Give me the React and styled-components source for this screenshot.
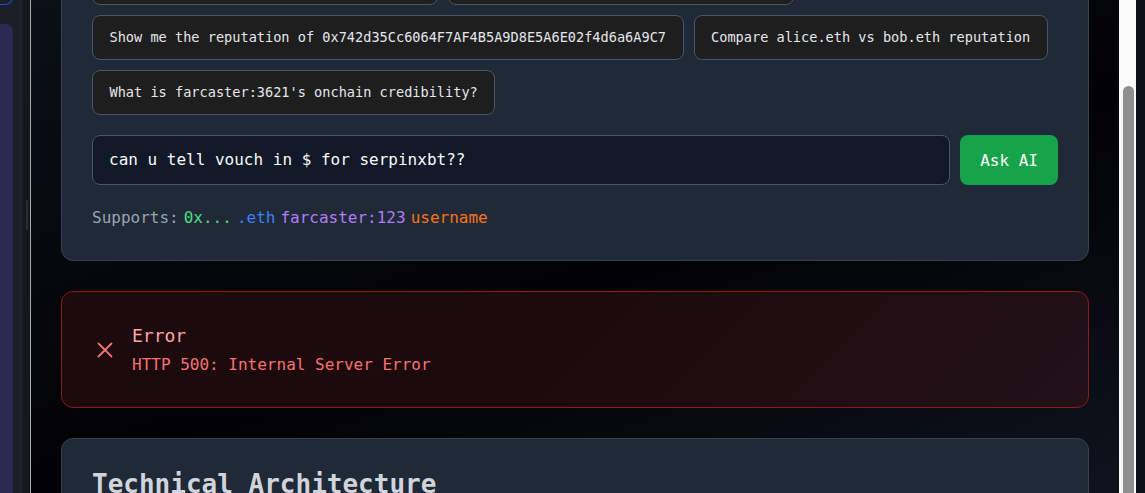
import React from "react";
import styled, { createGlobalStyle } from "styled-components";

const mono = `"DejaVu Sans Mono", "Liberation Mono", monospace`;

const GlobalStyle = createGlobalStyle`
  html, body {
    margin: 0;
    padding: 0;
    height: 100%;
    overflow: hidden;
    background: #0c0f17;
  }
  #root {
    height: 100%;
  }
`;

const suggestions = [
  "Analyze dwr.eth's reputation in detail",
  "Is vitalik.eth a trusted onchain user?",
  "Show me the reputation of 0x742d35Cc6064F7AF4B5A9D8E5A6E02f4d6a6A9C7",
  "Compare alice.eth vs bob.eth reputation",
  "What is farcaster:3621's onchain credibility?",
];

const supports = [
  { label: "0x...", color: "#4ade80" },
  { label: ".eth", color: "#3b82f6" },
  { label: "farcaster:123", color: "#b27cf6" },
  { label: "username", color: "#f97316" },
];

export default function App() {
  return (
    <>
      <GlobalStyle />
      <Shell>
        <Sidebar>
          <SideTopBox />
          <SidePanel />
        </Sidebar>
        <Splitter>
          <Handle />
        </Splitter>
        <Divider />
        <Main>
          <Column>
            <Card>
              <Chips>
                {suggestions.map((s) => (
                  <Chip key={s}>{s}</Chip>
                ))}
              </Chips>
              <InputRow>
                <QueryInput defaultValue="can u tell vouch in $ for serpinxbt??" />
                <AskButton>Ask AI</AskButton>
              </InputRow>
              <Supports>
                <span>Supports:</span>
                {supports.map((s) => (
                  <Tag key={s.label} $color={s.color}>
                    {s.label}
                  </Tag>
                ))}
              </Supports>
            </Card>

            <ErrorBox>
              <ErrorIcon viewBox="0 0 16 16">
                <path d="M1.5 1.5 L14.5 14.5 M14.5 1.5 L1.5 14.5" />
              </ErrorIcon>
              <div>
                <ErrorTitle>Error</ErrorTitle>
                <ErrorMessage>HTTP 500: Internal Server Error</ErrorMessage>
              </div>
            </ErrorBox>

            <Card>
              <SectionTitle>Technical Architecture</SectionTitle>
            </Card>
          </Column>
        </Main>
        <ScrollTrack>
          <ScrollThumb />
        </ScrollTrack>
        <RightEdge />
      </Shell>
    </>
  );
}

const Shell = styled.div`
  display: flex;
  width: 100vw;
  height: 100vh;
  overflow: hidden;
  background: #0c0f17;
`;

const Sidebar = styled.div`
  flex: none;
  width: 23px;
  box-sizing: border-box;
  padding-right: 10px;
  background: #1e1f26;
  display: flex;
  flex-direction: column;
`;

const SideTopBox = styled.div`
  flex: none;
  height: 20px;
  margin-top: -17px;
  border: 1px solid #1d4ed8;
  border-left: none;
  border-radius: 0 0 8px 0;
`;

const SidePanel = styled.div`
  flex: 1;
  margin-top: 19px;
  background: #2d2950;
  border-radius: 0 8px 0 0;
`;

const Splitter = styled.div`
  flex: none;
  width: 7px;
  background: #16161d;
  display: flex;
  justify-content: center;
  padding-top: 200px;
  box-sizing: border-box;
`;

const Handle = styled.div`
  width: 2px;
  height: 30px;
  border-radius: 1px;
  background: #2c2c38;
`;

const Divider = styled.div`
  flex: none;
  width: 1px;
  background: #ababab;
`;

const Main = styled.div`
  flex: 1;
  min-width: 0;
  overflow: hidden;
  padding: 0 30px;
  background: linear-gradient(160deg, #0b0f18 0%, #020204 55%, #0e131d 100%);
`;

const Column = styled.div`
  margin-top: -71px;
  display: flex;
  flex-direction: column;
  gap: 30px;
`;

const Card = styled.div`
  background: #1f2937;
  border: 1px solid #374151;
  border-radius: 12px;
  padding: 30px;
`;

const Chips = styled.div`
  display: flex;
  flex-wrap: wrap;
  gap: 10px;
  margin-bottom: 20px;
`;

const Chip = styled.button`
  background: #1e1e1e;
  border: 1px solid #4b5563;
  border-radius: 8px;
  padding: 13px 16.5px;
  color: #e5e7eb;
  font-family: ${mono};
  font-size: 13.6px;
  line-height: 17px;
  cursor: pointer;
`;

const InputRow = styled.div`
  display: flex;
  gap: 10px;
`;

const QueryInput = styled.input`
  flex: 1;
  min-width: 0;
  background: #111827;
  border: 1px solid #4b5563;
  border-radius: 8px;
  padding: 14px 16px;
  color: #f9fafb;
  font-family: ${mono};
  font-size: 16px;
  line-height: 20px;
  outline: none;
`;

const AskButton = styled.button`
  flex: none;
  background: #16a34a;
  color: #ffffff;
  border: none;
  border-radius: 8px;
  padding: 0 20px;
  font-family: ${mono};
  font-size: 16px;
  cursor: pointer;
`;

const Supports = styled.div`
  margin-top: 21px;
  display: flex;
  gap: 5px;
  font-family: ${mono};
  font-size: 16px;
  line-height: 24px;
  color: #9ca3af;
`;

const Tag = styled.span`
  color: ${(p) => p.$color};
`;

const ErrorBox = styled.div`
  display: flex;
  align-items: center;
  gap: 19px;
  padding: 30px 35px;
  border: 1px solid #8b1c1c;
  border-radius: 12px;
  background: linear-gradient(135deg, #1c0a0d 0%, #1c0a0c 50%, #23111a 100%);
  font-family: ${mono};
`;

const ErrorIcon = styled.svg`
  flex: none;
  width: 16px;
  height: 16px;
  fill: none;
  stroke: #f87171;
  stroke-width: 1.8;
  stroke-linecap: round;
`;

const ErrorTitle = styled.div`
  color: #fca5a5;
  font-size: 18px;
  line-height: 27px;
  font-weight: 500;
  margin-bottom: 4px;
`;

const ErrorMessage = styled.div`
  color: #f87171;
  font-size: 16px;
  line-height: 24px;
`;

const SectionTitle = styled.h2`
  margin: 0;
  font-family: ${mono};
  font-size: 26px;
  line-height: 31px;
  font-weight: 700;
  color: #d1d5db;
`;

const ScrollTrack = styled.div`
  flex: none;
  width: 17px;
  background: #f9f9f9;
  display: flex;
  flex-direction: column;
  padding-top: 86px;
  box-sizing: border-box;
`;

const ScrollThumb = styled.div`
  flex: 1;
  margin-left: 4px;
  width: 11px;
  background: #8f8f8f;
  border-radius: 6px 6px 0 0;
`;

const RightEdge = styled.div`
  flex: none;
  width: 9px;
  background: #0c0f17;
`;
